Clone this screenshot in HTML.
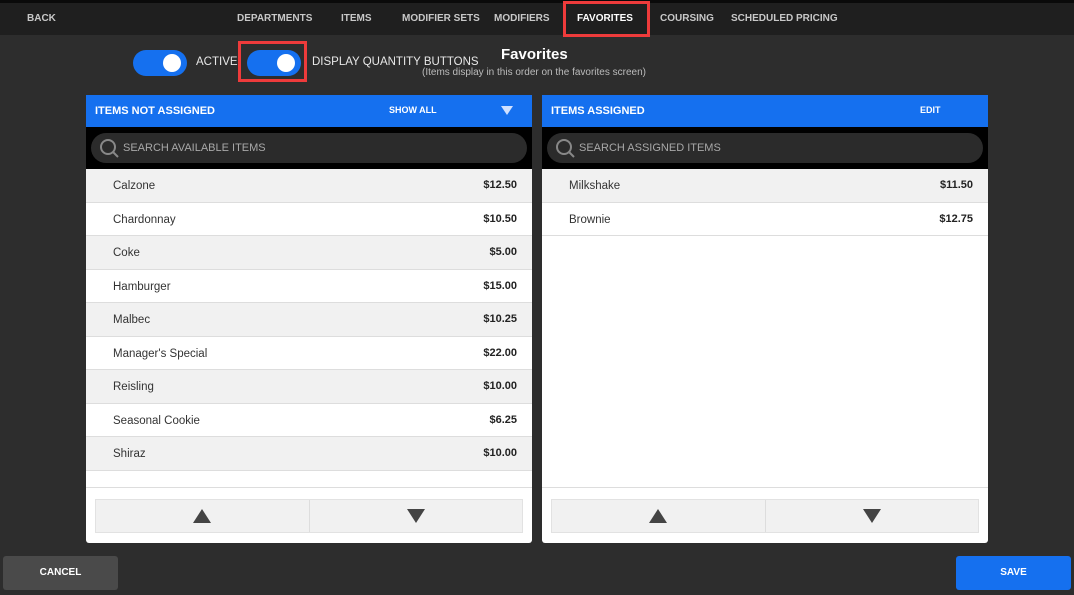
<!DOCTYPE html>
<html><head><style>
*{box-sizing:border-box;margin:0;padding:0}
body{width:1074px;height:595px;background:#2d2d2d;font-family:"Liberation Sans",sans-serif;position:relative;overflow:hidden;color:#fff}
.top{position:absolute;left:0;top:0;width:1074px;height:35px;background:#1f1f1f;border-top:3px solid #0a0a0a}
.nav{position:absolute;top:13px;font-size:10px;font-weight:bold;color:#c8c8c8}
.red{position:absolute;border:3px solid #ee3b3b}
.tog{position:absolute;width:54px;height:26px;border-radius:13px;background:#1570ef}
.tog::after{content:"";position:absolute;right:6px;top:4px;width:18px;height:18px;border-radius:50%;background:#fff}
.lbl{position:absolute;font-size:11.5px;color:#e8e8e8}
.panel{position:absolute;top:95px;width:446px;height:448px;background:#fff;border-radius:0 0 3px 3px;overflow:hidden}
.hd{height:32px;background:#1570ef;position:relative;font-size:11px;font-weight:bold}
.hd span{position:absolute;top:10px}
.sb{height:42px;background:#000;padding:6px 5px}
.pill{height:30px;border-radius:15px;background:#2b2b2b;position:relative;font-size:11px;color:#a8a8a8;padding:9px 0 0 32px}
.pill svg{position:absolute;left:8px;top:5px}
.row{height:33.5px;border-bottom:1px solid #ddd;position:relative;font-size:11.5px;color:#333;padding:11px 0 0 27px}
.row:nth-child(odd){background:#f1f1f1}
.row b{position:absolute;right:15px;top:10px;font-size:11px;color:#222}
.btns{position:absolute;left:9px;right:9px;top:404px;height:34px;background:#f1f1f1;border:1px solid #e2e2e2;display:flex}
.btns div{flex:1;display:flex;align-items:center;justify-content:center}
.btns div:first-child{border-right:1px solid #ddd}
.sep{position:absolute;left:0;right:0;top:392px;border-top:1px solid #ddd}
</style></head><body>
<div class="top"></div>
<div class="nav" style="left:27px">BACK</div>
<div class="nav" style="left:237px">DEPARTMENTS</div>
<div class="nav" style="left:341px">ITEMS</div>
<div class="nav" style="left:402px">MODIFIER SETS</div>
<div class="nav" style="left:494px">MODIFIERS</div>
<div class="nav" style="left:577px;color:#fff">FAVORITES</div>
<div class="nav" style="left:660px">COURSING</div>
<div class="nav" style="left:731px">SCHEDULED PRICING</div>
<div class="red" style="left:563px;top:1px;width:87px;height:36px"></div>
<div class="tog" style="left:133px;top:50px"></div>
<div class="lbl" style="left:196px;top:56px">ACTIVE</div>
<div class="tog" style="left:247px;top:50px"></div>
<div class="red" style="left:238px;top:41px;width:69px;height:41px"></div>
<div class="lbl" style="left:312px;top:56px">DISPLAY QUANTITY BUTTONS</div>
<div style="position:absolute;left:501px;top:46px;font-size:15px;font-weight:bold">Favorites</div>
<div style="position:absolute;left:422px;top:67px;font-size:10px;color:#bbb">(Items display in this order on the favorites screen)</div>

<div class="panel" style="left:86px">
<div class="hd"><span style="left:9px">ITEMS NOT ASSIGNED</span><span style="left:303px;font-size:9px">SHOW ALL</span><span style="left:415px;top:11px;width:0;height:0;border-left:6px solid transparent;border-right:6px solid transparent;border-top:9px solid #cfe0ff"></span></div>
<div class="sb"><div class="pill"><svg width="22" height="22" viewBox="0 0 22 22"><circle cx="9" cy="9" r="7" fill="none" stroke="#888" stroke-width="2"/><line x1="14" y1="14" x2="19" y2="19" stroke="#888" stroke-width="2"/></svg>SEARCH AVAILABLE ITEMS</div></div>
<div>
<div class="row">Calzone<b>$12.50</b></div>
<div class="row">Chardonnay<b>$10.50</b></div>
<div class="row">Coke<b>$5.00</b></div>
<div class="row">Hamburger<b>$15.00</b></div>
<div class="row">Malbec<b>$10.25</b></div>
<div class="row">Manager's Special<b>$22.00</b></div>
<div class="row">Reisling<b>$10.00</b></div>
<div class="row">Seasonal Cookie<b>$6.25</b></div>
<div class="row">Shiraz<b>$10.00</b></div>
</div>
<div class="sep"></div>
<div class="btns"><div><svg width="20" height="16"><path d="M10 1L19 15H1Z" fill="#444"/></svg></div><div><svg width="20" height="16"><path d="M1 1H19L10 15Z" fill="#444"/></svg></div></div>
</div>

<div class="panel" style="left:542px">
<div class="hd"><span style="left:9px">ITEMS ASSIGNED</span><span style="left:378px;font-size:9px">EDIT</span></div>
<div class="sb"><div class="pill"><svg width="22" height="22" viewBox="0 0 22 22"><circle cx="9" cy="9" r="7" fill="none" stroke="#888" stroke-width="2"/><line x1="14" y1="14" x2="19" y2="19" stroke="#888" stroke-width="2"/></svg>SEARCH ASSIGNED ITEMS</div></div>
<div>
<div class="row">Milkshake<b>$11.50</b></div>
<div class="row" style="background:#fff">Brownie<b>$12.75</b></div>
</div>
<div class="sep"></div>
<div class="btns"><div><svg width="20" height="16"><path d="M10 1L19 15H1Z" fill="#444"/></svg></div><div><svg width="20" height="16"><path d="M1 1H19L10 15Z" fill="#444"/></svg></div></div>
</div>

<div style="position:absolute;left:3px;top:556px;width:115px;height:34px;background:#4a4a4a;border-radius:3px;font-size:10px;font-weight:bold;text-align:center;line-height:34px">CANCEL</div>
<div style="position:absolute;left:956px;top:556px;width:115px;height:34px;background:#1570ef;border-radius:3px;font-size:10px;font-weight:bold;text-align:center;line-height:34px">SAVE</div>
</body></html>
